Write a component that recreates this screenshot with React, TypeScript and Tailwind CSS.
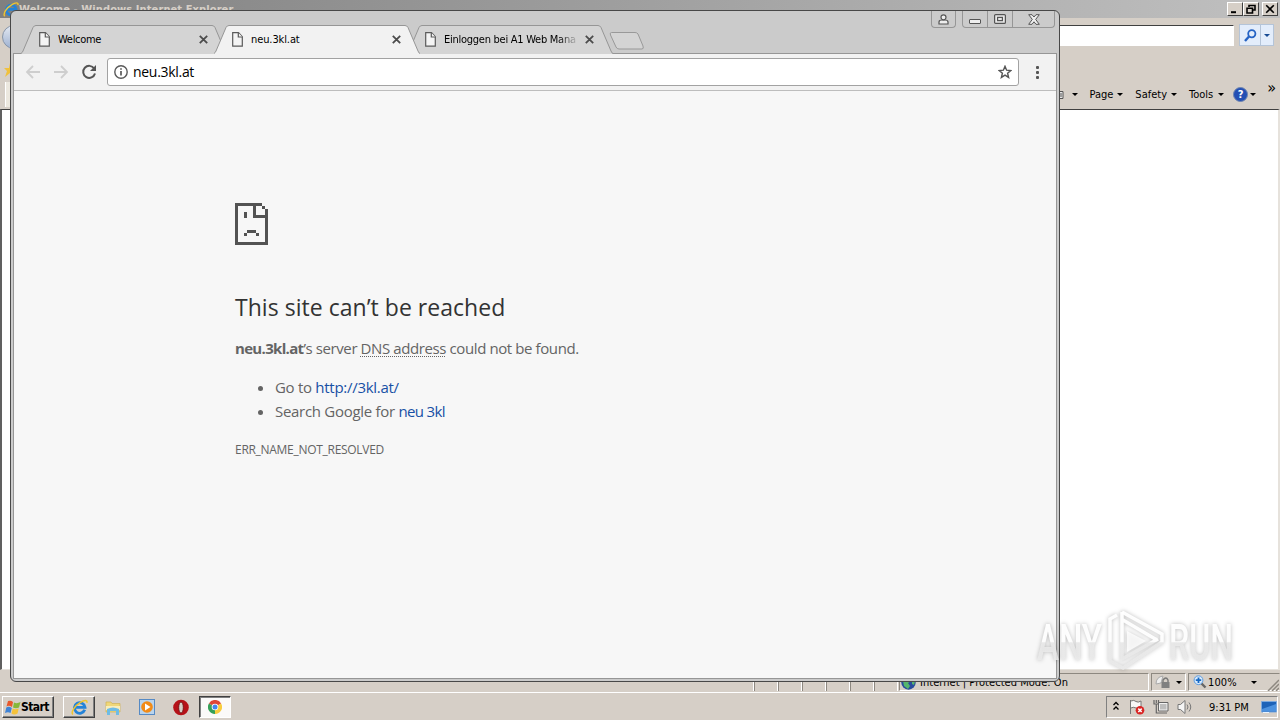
import type { ReactNode } from "react";
import clsx from "clsx";

const UI_FONT = "font-['DejaVu_Sans_Condensed','DejaVu_Sans',sans-serif]";

function PageIcon() {
  return (
    <svg className="h-[15px] w-[11px] shrink-0" viewBox="0 0 11 15" fill="#f4f4f4" stroke="#5a5a5a" strokeWidth="1.2">
      <path d="M.7 .7H6.5L10.3 4.7V14.2H.7Z" />
      <path d="M6.3 .7V5H10.3" />
    </svg>
  );
}

function CloseGlyph() {
  return (
    <svg className="h-[9px] w-[9px] shrink-0" viewBox="0 0 9 9" stroke="#4c4c4c" strokeWidth="1.8">
      <path d="M.8 .8L8.2 8.2M8.2 .8L.8 8.2" />
    </svg>
  );
}

function Caret() {
  return <span className="h-0 w-0 shrink-0 border-x-[3px] border-t-[3px] border-x-transparent border-t-black" />;
}

type TabProps = { title: string; active?: boolean; titleClass: string };

function Tab({ title, active, titleClass }: TabProps) {
  return (
    <div className={clsx("relative -mr-[13px] h-[29px] w-[206px] shrink-0", active && "z-10")}>
      <svg className="absolute inset-0 h-full w-full" viewBox="0 0 206 29" fill={active ? "#f2f2f2" : "#d4d4d4"}>
        <path d="M0 29V28.5C1 28 1.5 27 2 26L12 2.5Q13 .5 15 .5H191Q193 .5 194 2.5L204 26Q205 28.5 206 28.5V29Z" />
        <path
          d="M0 28.5C1 28 1.5 27 2 26L12 2.5Q13 .5 15 .5H191Q193 .5 194 2.5L204 26Q205 28.5 206 28.5"
          fill="none"
          stroke="#969696"
        />
      </svg>
      <div className="relative flex h-full items-center pl-[18px]">
        <PageIcon />
        <span className={clsx("ml-[8px] w-[135px] overflow-hidden text-[11px] leading-[16px] whitespace-nowrap", UI_FONT, titleClass)}>
          {title}
        </span>
        <span className="ml-[6px] flex">
          <CloseGlyph />
        </span>
      </div>
    </div>
  );
}

function CaptionButtons() {
  return (
    <div className="absolute top-0 right-[4px] flex h-[17px] gap-[6px]">
      <div className="flex w-[25px] items-center justify-center rounded-b-[4px] border border-t-0 border-[#969696]">
        <svg className="h-[11px] w-[11px]" viewBox="0 0 11 11" fill="#eee" stroke="#555" strokeWidth="1.2">
          <path d="M1 10V8Q1 6 4 6H7Q10 6 10 8V10Z" />
          <circle cx="5.5" cy="3.3" r="2.5" />
        </svg>
      </div>
      <div className="flex w-[93px] rounded-b-[4px] border border-t-0 border-[#969696]">
        <div className="flex w-[25px] items-end justify-center border-r border-[#969696] pb-[3px]">
          <span className="h-[5px] w-[12px] rounded-[1px] border border-[#555] bg-[#eee]" />
        </div>
        <div className="flex w-[25px] items-center justify-center border-r border-[#969696]">
          <svg className="h-[10px] w-[12px]" viewBox="0 0 12 10" fill="#e8e8e8" stroke="#555" strokeWidth="1.2">
            <rect x=".6" y=".6" width="10.8" height="8.8" rx="1" />
            <rect x="3.6" y="3.4" width="4.8" height="3.2" />
          </svg>
        </div>
        <div className="flex flex-1 items-center justify-center">
          <svg className="h-[11px] w-[12px]" viewBox="0 0 12 11" fill="#eee" stroke="#555" strokeWidth="1">
            <path d="M.7 .7H4L6 3L8 .7H11.3L7.7 5.4L11.3 10.3H8L6 7.8L4 10.3H.7L4.3 5.4Z" />
          </svg>
        </div>
      </div>
    </div>
  );
}

function AddressBar() {
  return (
    <div className="flex h-[37px] items-center border-b border-[#bdbdbd] bg-[#f2f2f2] pr-[13px] pl-[11px]">
      <svg className="h-[14px] w-[16px]" viewBox="0 0 16 14" fill="none" stroke="#cecece" strokeWidth="1.8">
        <path d="M15 7H2M8 1L2 7L8 13" />
      </svg>
      <svg className="ml-[12px] h-[14px] w-[16px]" viewBox="0 0 16 14" fill="none" stroke="#cecece" strokeWidth="1.8">
        <path d="M1 7H14M8 1L14 7L8 13" />
      </svg>
      <svg className="ml-[12px] h-[16px] w-[16px]" viewBox="0 0 16 16" fill="none" stroke="#555" strokeWidth="2">
        <path d="M13.2 4.5A6 6 0 1 0 14 9.5" />
        <path d="M15 1V7H9Z" fill="#555" stroke="none" />
      </svg>
      <div className="ml-[10px] flex h-[28px] w-[912px] shrink-0 items-center rounded-[3px] border border-[#a2a2a2] bg-white px-[6px]">
        <svg className="h-[14px] w-[14px]" viewBox="0 0 14 14" fill="none" stroke="#5a5a5a" strokeWidth="1.4">
          <circle cx="7" cy="7" r="6.2" />
          <path d="M7 6V10.5M7 3.2V4.8" strokeWidth="1.7" />
        </svg>
        <span className="ml-[5px] flex-1 font-['Open_Sans','Noto_Sans',sans-serif] text-[14px] leading-[20px] tracking-[-0.3px] text-black">
          neu.3kl.at
        </span>
        <svg className="h-[14px] w-[14px]" viewBox="0 0 14 14" fill="none" stroke="#555" strokeWidth="1.4">
          <path d="M7 1.3L8.6 5.2L12.8 5.5L9.6 8.2L10.6 12.4L7 10.1L3.4 12.4L4.4 8.2L1.2 5.5L5.4 5.2Z" />
        </svg>
      </div>
      <div className="ml-[17px] flex flex-col gap-[2px]">
        <span className="h-[3px] w-[3px] rounded-[1px] bg-[#555]" />
        <span className="h-[3px] w-[3px] rounded-[1px] bg-[#555]" />
        <span className="h-[3px] w-[3px] rounded-[1px] bg-[#555]" />
      </div>
    </div>
  );
}

function ErrorPage() {
  return (
    <div className="flex-1 bg-[#f7f7f7] pt-[112px] pl-[221px] font-['Open_Sans','Noto_Sans',sans-serif] text-[15px] leading-[24px] text-[#646464]">
      <svg className="h-[42px] w-[33px]" viewBox="0 0 11 14" fill="#535353" shapeRendering="crispEdges">
        <path d="M0 0H9V1H10V2H11V14H0ZM1 1V13H10V5H6V1ZM7 1V4H10V2H9V1Z" fillRule="evenodd" />
        <path d="M3 3H4V5H3ZM4 9H7V10H4ZM3 10H4V11H3ZM7 10H8V11H7Z" />
      </svg>
      <h1 className="mt-[46px] text-[23px] leading-[32px] tracking-[0.03px] whitespace-nowrap text-[#333]">This site can’t be reached</h1>
      <p className="mt-[13px] tracking-[-0.4px] whitespace-nowrap">
        <strong className="font-bold tracking-[-0.68px]">neu.3kl.at</strong>’s server{" "}
        <span className="underline decoration-dotted decoration-1 underline-offset-[2px]">DNS address</span> could not be found.
      </p>
      <ul className="mt-[15px] list-disc pl-[40px] tracking-[-0.29px]">
        <li>
          Go to <span className="tracking-[-0.28px] text-[#1750a5]">http://3kl.at/</span>
        </li>
        <li>
          Search Google for <span className="tracking-[-0.65px] text-[#1750a5]">neu 3kl</span>
        </li>
      </ul>
      <p className="mt-[15px] text-[12px] tracking-[-0.29px]">ERR_NAME_NOT_RESOLVED</p>
    </div>
  );
}

function ChromeWindow() {
  return (
    <div className="absolute top-[10px] left-[10px] flex h-[672px] w-[1050px] flex-col rounded-[6px] border border-[#484848] bg-[#cbcbcb] px-[2px] pb-[2px]">
      <CaptionButtons />
      <div className="flex h-[43px] items-end pl-[8px]">
        <Tab title="Welcome" titleClass="tracking-[-0.3px]" />
        <Tab title="neu.3kl.at" active titleClass="tracking-[-0.1px]" />
        <Tab
          title="Einloggen bei A1 Web Mana"
          titleClass="tracking-[-0.26px] [mask-image:linear-gradient(to_right,black_85%,transparent)]"
        />
        <svg className="mb-[4px] ml-[9px] h-[18px] w-[36px]" viewBox="0 0 36 18" fill="#d4d4d4" stroke="#999">
          <path d="M2.5 .5H26Q28 .5 29 2L34 14Q35 17 33 17H10Q8 17 7 15L1.5 3Q.5 .5 2.5 .5Z" />
        </svg>
      </div>
      <div className="-mt-px flex flex-1 flex-col border border-[#969696]">
        <AddressBar />
        <ErrorPage />
      </div>
    </div>
  );
}

function IeLogo({ className }: { className: string }) {
  return (
    <svg className={className} viewBox="0 0 18 18" fill="none">
      <path d="M14.5 11.5A5.6 5.6 0 1 1 14.8 8.8H5" stroke="#2483d8" strokeWidth="3" />
      <path d="M2 16.5C-.5 14 4 7 10 3.5C14 1 17.5 .6 16.8 4" stroke="#f0c52e" strokeWidth="1.6" />
    </svg>
  );
}

function SysButton({ children }: { children: ReactNode }) {
  return (
    <div className="flex h-[14px] w-[16px] items-center justify-center border border-t-white border-r-[#404040] border-b-[#404040] border-l-white bg-[#d6cfc7]">
      <svg className="h-[10px] w-[10px]" viewBox="0 0 10 10" fill="none" stroke="#000" strokeWidth="1.6">
        {children}
      </svg>
    </div>
  );
}

function IeHeader() {
  return (
    <>
      <div className="flex h-[18px] items-center bg-linear-to-r from-[#808080] to-[#c0c0c0] pr-[2px] pl-[3px]">
        <IeLogo className="h-[17px] w-[16px]" />
        <span className="mt-[2px] flex-1 font-['DejaVu_Sans_Condensed','DejaVu_Sans',sans-serif] text-[11px] leading-[14px] font-bold tracking-[0.1px] text-[#d6cfc7]">
          Welcome - Windows Internet Explorer
        </span>
        <div className="flex">
          <SysButton>
            <path d="M1 8.2H6" strokeWidth="2" />
          </SysButton>
          <SysButton>
            <path d="M3 3V1.5H9V6H7M1 4.3H6.5V9H1Z" />
          </SysButton>
          <span className="w-[3px]" />
          <SysButton>
            <path d="M1.2 1.2L8.8 8.8M8.8 1.2L1.2 8.8" />
          </SysButton>
        </div>
      </div>
      <div className="flex h-[91px] flex-col bg-[#d6cfc7]">
        <div className="flex h-[37px] items-center pl-[2px]">
          <span className="h-[24px] w-[24px] rounded-full border border-[#8795a8] bg-linear-to-b from-[#e4e9f1] to-[#9fb2d1]" />
          <div className="mt-[-2px] ml-[40px] h-[21px] w-[1168px] border border-t-[#404040] border-r-white border-b-white border-l-[#404040] bg-white" />
          <div className="mt-[-3px] ml-[5px] flex h-[22px] w-[35px] border border-[#b4c4d8] bg-[#e3edfb]">
            <span className="flex w-[21px] items-center justify-center border-r border-[#b4c4d8]">
              <svg className="h-[13px] w-[13px]" viewBox="0 0 13 13" fill="none" stroke="#2563c4">
                <circle cx="7.8" cy="4.8" r="3.6" strokeWidth="1.8" />
                <path d="M5 7.5L1 12" strokeWidth="2.4" />
              </svg>
            </span>
            <span className="flex flex-1 items-center justify-center">
              <span className="h-0 w-0 border-x-[3px] border-t-[3px] border-x-transparent border-t-[#174b94]" />
            </span>
          </div>
        </div>
        <div className="flex h-[25px] items-end pl-[4px]">
          <svg className="mb-[2px] h-[16px] w-[14px]" viewBox="0 0 14 16" fill="#f0c13c">
            <path d="M6 1L8 6L13 6L9 9L11 15L6 11L1 15L3 9L0 6H5Z" />
          </svg>
        </div>
        <div className={clsx("flex flex-1 items-center justify-end pr-[4px] text-[11px] leading-[14px] text-black", UI_FONT)}>
          <span className="mr-auto h-[25px] w-[20px] translate-x-[5px] border-l border-white bg-[#ece8df]" />
          <svg className="mr-[7px] h-[10px] w-[9px]" viewBox="0 0 9 10" fill="#e8e8e8" stroke="#555">
            <path d="M1.5 1.5H7V8.5H1.5ZM3 4H6M3 6H6" />
          </svg>
          <Caret />
          <span className="mr-[4px] ml-[11px]">Page</span>
          <Caret />
          <span className="mr-[4px] ml-[12px]">Safety</span>
          <Caret />
          <span className="mr-[5px] ml-[12px]">Tools</span>
          <Caret />
          <span className="mr-[2px] ml-[9px] flex h-[15px] w-[15px] items-center justify-center rounded-full border border-[#6f85b0] bg-[#2450b4] text-[11px] font-bold text-white">
            ?
          </span>
          <Caret />
          <span className="ml-[11px] -translate-y-[7px] text-[16px] leading-[14px]">»</span>
        </div>
      </div>
    </>
  );
}

const SECURITY_CELLS = [0, 1, 2, 3, 4, 5];

function IeStatusBar() {
  return (
    <div className={clsx("flex h-[22px] items-center bg-[#d6cfc7] pt-[2px] text-[11px] text-black", UI_FONT)}>
      <div className="h-[18px] w-[754px] border-r border-white" />
      {SECURITY_CELLS.map((cell) => (
        <div key={cell} className="h-[18px] w-[24px] border-r border-l border-r-white border-l-[#8d8880]" />
      ))}
      <div className="ml-[1px] flex h-[18px] w-[250px] items-center border border-t-[#8d8880] border-r-white border-b-white border-l-[#8d8880]">
        <svg className="ml-px h-[15px] w-[15px]" viewBox="0 0 15 15">
          <circle cx="7.5" cy="7.5" r="7.2" fill="#294c9d" />
          <path d="M2 6L7 3L10 6L7 8L9 11L7 14L3 11Z" fill="#55b66c" />
          <path d="M11 4L14 6L13 10L11 9Z" fill="#55b66c" />
        </svg>
        <span className="mt-[2px] ml-[4px] tracking-[0.04px] whitespace-nowrap">Internet | Protected Mode: On</span>
      </div>
      <div className="ml-[2px] flex h-[18px] w-[35px] items-center border border-t-[#8d8880] border-r-white border-b-white border-l-[#8d8880] pl-[3px]">
        <svg className="mr-[5px] h-[14px] w-[16px]" viewBox="0 0 16 14">
          <path d="M1 9Q1 2 8 1L6 8Z" fill="#eee" stroke="#aaa" />
          <path d="M8 8V5Q11 1 13 5V8" fill="none" stroke="#777" strokeWidth="1.4" />
          <rect x="6.5" y="7" width="8" height="6" fill="#808080" />
        </svg>
        <Caret />
      </div>
      <div className="ml-[2px] flex h-[18px] flex-1 items-center border border-t-[#8d8880] border-b-white border-l-[#8d8880] border-r-transparent pl-[4px]">
        <svg className="h-[14px] w-[14px]" viewBox="0 0 14 14" fill="none">
          <path d="M8 8L12.5 12.5" stroke="#666" strokeWidth="2.4" />
          <circle cx="5.5" cy="5.2" r="4.4" fill="#d8eafc" stroke="#5d9ce0" />
          <path d="M5.5 2.5V8M2.8 5.2H8.2" stroke="#1769c4" strokeWidth="1.8" />
        </svg>
        <span className="mt-[2px] ml-[1px] w-[43px] tracking-[0.1px]">100%</span>
        <Caret />
        <svg className="mt-[5px] ml-auto h-[12px] w-[12px]" viewBox="0 0 12 12" stroke="#8d8880" strokeWidth="1.5">
          <path d="M1 12L12 1M5 12L12 5M9 12L12 9" />
        </svg>
      </div>
    </div>
  );
}

function Taskbar() {
  return (
    <div className={clsx("flex h-[28px] items-start border-t border-white bg-[#d6cfc7] pt-[3px] text-black", UI_FONT)}>
      <div className="ml-[2px] flex h-[22px] w-[52px] items-center border border-t-white border-r-[#404040] border-b-[#404040] border-l-white pl-[2px] shadow-[inset_-1px_-1px_#808080]">
        <svg className="h-[15px] w-[16px]" viewBox="0 0 16 15">
          <path d="M3 1Q6 0 8 2L7 7Q4 5 1.5 6.5Z" fill="#e8582c" />
          <path d="M9 2.5Q12 4 15.5 2L14 7.5Q11 9 8 7.5Z" fill="#86b83a" />
          <path d="M1.3 7.5Q4 6 6.8 8L5.5 13Q3 11.5 0 13Z" fill="#3f83d6" />
          <path d="M7.7 8.5Q10 10 13.7 8.5L12.5 13.5Q9 15.5 6.5 13.5Z" fill="#f5c23a" />
        </svg>
        <span className="text-[12px] font-bold tracking-[-0.6px]">Start</span>
      </div>
      <div className="ml-[9px] flex h-[22px] w-[32px] items-center justify-center border border-t-white border-r-[#404040] border-b-[#404040] border-l-white shadow-[inset_-1px_-1px_#808080]">
        <IeLogo className="h-[17px] w-[17px]" />
      </div>
      <svg className="mt-[4px] ml-[10px] h-[16px] w-[16px]" viewBox="0 0 16 16">
        <path d="M1 2H6L7 3.5H15V12H1Z" fill="#efd779" stroke="#d0b254" strokeWidth=".7" />
        <path d="M1 6H15V10H1Z" fill="#f8eebb" />
        <path d="M2 15V9Q8 6 14 9V15H11V11H5V15Z" fill="#6ebce5" />
      </svg>
      <svg className="mt-[3px] ml-[18px] h-[16px] w-[16px]" viewBox="0 0 16 16">
        <rect x=".5" y=".5" width="15" height="15" fill="#b9d4ed" stroke="#568ac4" />
        <circle cx="8" cy="8" r="5.8" fill="#f28b17" />
        <path d="M6 4.5L11.5 8L6 11.5Z" fill="#fff" />
      </svg>
      <svg className="mt-[3px] ml-[18px] h-[17px] w-[16px]" viewBox="0 0 16 17">
        <circle cx="8" cy="8.5" r="7.8" fill="#b51218" />
        <ellipse cx="8" cy="8.5" rx="2.3" ry="5.5" fill="#d6cfc7" stroke="#68090c" strokeWidth=".8" />
      </svg>
      <div className="ml-[10px] flex h-[22px] w-[32px] items-center justify-center border border-t-[#404040] border-r-white border-b-white border-l-[#404040] bg-[#fbfaf9] shadow-[inset_1px_1px_#808080]">
        <svg className="h-[14px] w-[14px]" viewBox="0 0 14 14">
          <path d="M7 7L.9 3.5A7 7 0 0 1 13.1 3.5Z" fill="#df4636" />
          <path d="M7 7L13.1 3.5A7 7 0 0 1 7 14Z" fill="#f8cc3c" />
          <path d="M7 7L7 14A7 7 0 0 1 .9 3.5Z" fill="#36a058" />
          <circle cx="7" cy="7" r="3.3" fill="#fff" />
          <circle cx="7" cy="7" r="2.5" fill="#4286ed" />
        </svg>
      </div>
      <div className="mr-[2px] ml-auto flex h-[22px] w-[172px] items-center border border-t-[#808080] border-r-white border-b-white border-l-[#808080] pl-[6px]">
        <svg className="mb-[2px] h-[10px] w-[6px]" viewBox="0 0 6 10" fill="none" stroke="#000" strokeWidth="1.3">
          <path d="M.5 4L3 1.5L5.5 4M.5 8.5L3 6L5.5 8.5" />
        </svg>
        <svg className="ml-[10px] h-[16px] w-[16px]" viewBox="0 0 16 16">
          <path d="M1.5 1V15M2 2Q5 .5 7 2.5Q9 4 12 2V9Q9 11 7 9Q4 7.5 2 9" fill="#f8f8f8" stroke="#777" />
          <circle cx="11" cy="11.3" r="4.3" fill="#d92524" />
          <path d="M9.3 9.6L12.7 13M12.7 9.6L9.3 13" stroke="#fff" strokeWidth="1.5" />
        </svg>
        <svg className="ml-[8px] h-[16px] w-[16px]" viewBox="0 0 16 16" fill="none" stroke="#666">
          <path d="M5.5 3.5H15V12H5.5Z" fill="#f1f1f1" />
          <path d="M7 5H13.5V10.5H7Z" fill="#bdbdbd" stroke="none" />
          <path d="M1 1V5H5.5V1M3.3 1V4M3.3 5V14H14" strokeWidth="1.2" />
        </svg>
        <svg className="ml-[8px] h-[16px] w-[17px]" viewBox="0 0 17 16" fill="#f5f5f5" stroke="#777">
          <path d="M1 5.5H3.5L8 1.5V14.5L3.5 10.5H1Z" />
          <path d="M10 5.5Q12 8 10 10.5M12 3.5Q15.5 8 12 12.5" fill="none" />
        </svg>
        <span className="mt-[2px] ml-[15px] text-[11px] whitespace-nowrap">9:31 PM</span>
        <svg className="ml-auto h-[14px] w-[16px] shrink-0" viewBox="0 0 16 14">
          <path d="M.5 1.5H15.5V12H.5Z" fill="#1d63b8" stroke="#7ca9dd" />
          <path d="M1 9L15 4V11.5H1Z" fill="#4c92df" />
          <path d="M2 12.5H8" stroke="#e9f2fb" />
        </svg>
      </div>
    </div>
  );
}

function Watermark() {
  return (
    <svg
      className="absolute top-[604px] left-[1028px] h-[72px] w-[220px] drop-shadow-[0_0_2px_rgba(0,0,0,0.28)]"
      viewBox="0 0 220 72"
      fill="url(#fade)"
      fontFamily="Roboto, sans-serif"
      fontSize="50"
      fontWeight="500"
    >
      <defs>
        <linearGradient id="fade" gradientUnits="userSpaceOnUse" x1="0" y1="0" x2="0" y2="72">
          <stop offset=".52" stopColor="#fff" stopOpacity=".95" />
          <stop offset=".54" stopColor="#ebebeb" stopOpacity=".85" />
        </linearGradient>
      </defs>
      <text x="9" y="56" textLength="65" lengthAdjust="spacingAndGlyphs">
        ANY
      </text>
      <text x="141" y="56" textLength="64" lengthAdjust="spacingAndGlyphs">
        RUN
      </text>
      <g fill="none" stroke="url(#fade)" strokeWidth="3.5">
        <path d="M94 8L134 30V38L95 64L82 57V15L89 11" />
        <path d="M94 8V55L130 35M95 16L129 36" />
      </g>
      <path d="M99 27L118 37L99 48Z" fill="#fff" fillOpacity=".8" />
    </svg>
  );
}

export default function App() {
  return (
    <div className="relative flex h-[720px] w-[1280px] flex-col overflow-hidden bg-[#d6cfc7]">
      <IeHeader />
      <div className="flex-1 border-t border-r-2 border-b border-l-2 border-t-[#404040] border-r-[#e6e2dc] border-b-[#e6e2dc] border-l-[#606060] bg-white" />
      <IeStatusBar />
      <Taskbar />
      <ChromeWindow />
      <Watermark />
    </div>
  );
}
